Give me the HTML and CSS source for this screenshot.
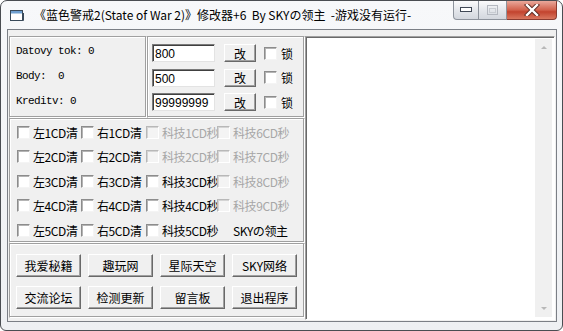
FILE: index.html
```html
<!DOCTYPE html>
<html>
<head>
  <meta charset="UTF-8">
  <title>蓝色警戒2 修改器</title>
  <link rel="stylesheet" href="styles.css">
</head>
<body>

  <div class="janela">
    <div class="titulo">
      <svg class="icone" width="14" height="12" viewBox="0 0 14 12">
        <rect x="0.5" y="0.5" width="12" height="10" fill="#fff" stroke="#3a4a5a"/>
        <rect x="1" y="1" width="11" height="2.5" fill="#6f9fd0"/>
        <path d="M3 10.5 L13.5 10.5 L13.5 3" fill="none" stroke="#3a4a5a"/>
      </svg>
      <span class="texto-titulo">《蓝色警戒2(State of War 2)》修改器+6&nbsp; By SKYの领主&nbsp; -游戏没有运行-</span>
      <div class="controles">
        <div class="ctl ctl-min">
          <svg width="12" height="6" viewBox="0 0 12 6"><rect x="0.5" y="0.5" width="11" height="4" fill="#fff" stroke="#404855"/></svg>
        </div>
        <div class="ctl ctl-max">
          <svg width="11" height="10" viewBox="0 0 11 10"><rect x="0.5" y="0.5" width="10" height="9" fill="none" stroke="#b4b8c0"/><rect x="2.5" y="3.5" width="6" height="4" fill="none" stroke="#c8ccd2"/></svg>
        </div>
        <div class="ctl ctl-fechar">
          <svg width="16" height="12" viewBox="0 0 16 12">
            <path d="M3 1 L13 11 M13 1 L3 11" stroke="#5a2a22" stroke-width="4.2" stroke-linecap="square"/>
            <path d="M3 1 L13 11 M13 1 L3 11" stroke="#fff" stroke-width="2.4" stroke-linecap="square"/>
          </svg>
        </div>
      </div>
    </div>

    <div class="cliente">
      <div class="coluna">
        <div class="linha-topo">
          <div class="painel info">
            <div class="rotulo">Datovy tok: 0</div>
            <div class="rotulo">Body:&nbsp; 0</div>
            <div class="rotulo">Kreditv: 0</div>
          </div>
          <div class="painel edicao">
            <div class="campo">
              <div class="entrada">800</div>
              <div class="botao mini">改</div>
              <div class="caixa"></div>
              <span class="trava">锁</span>
            </div>
            <div class="campo">
              <div class="entrada">500</div>
              <div class="botao mini">改</div>
              <div class="caixa"></div>
              <span class="trava">锁</span>
            </div>
            <div class="campo">
              <div class="entrada">99999999</div>
              <div class="botao mini">改</div>
              <div class="caixa"></div>
              <span class="trava">锁</span>
            </div>
          </div>
        </div>

        <div class="painel opcoes">
          <div class="opcao"><div class="caixa"></div><span>左1CD清</span></div>
          <div class="opcao"><div class="caixa"></div><span>右1CD清</span></div>
          <div class="opcao off"><div class="caixa"></div><span>科技1CD秒</span></div>
          <div class="opcao off"><div class="caixa"></div><span>科技6CD秒</span></div>

          <div class="opcao"><div class="caixa"></div><span>左2CD清</span></div>
          <div class="opcao"><div class="caixa"></div><span>右2CD清</span></div>
          <div class="opcao off"><div class="caixa"></div><span>科技2CD秒</span></div>
          <div class="opcao off"><div class="caixa"></div><span>科技7CD秒</span></div>

          <div class="opcao"><div class="caixa"></div><span>左3CD清</span></div>
          <div class="opcao"><div class="caixa"></div><span>右3CD清</span></div>
          <div class="opcao"><div class="caixa"></div><span>科技3CD秒</span></div>
          <div class="opcao off"><div class="caixa"></div><span>科技8CD秒</span></div>

          <div class="opcao"><div class="caixa"></div><span>左4CD清</span></div>
          <div class="opcao"><div class="caixa"></div><span>右4CD清</span></div>
          <div class="opcao"><div class="caixa"></div><span>科技4CD秒</span></div>
          <div class="opcao off"><div class="caixa"></div><span>科技9CD秒</span></div>

          <div class="opcao"><div class="caixa"></div><span>左5CD清</span></div>
          <div class="opcao"><div class="caixa"></div><span>右5CD清</span></div>
          <div class="opcao"><div class="caixa"></div><span>科技5CD秒</span></div>
          <div class="opcao assinatura"><span>SKYの领主</span></div>
        </div>

        <div class="painel atalhos">
          <div class="botao">我爱秘籍</div>
          <div class="botao">趣玩网</div>
          <div class="botao">星际天空</div>
          <div class="botao">SKY网络</div>
          <div class="botao">交流论坛</div>
          <div class="botao">检测更新</div>
          <div class="botao">留言板</div>
          <div class="botao">退出程序</div>
        </div>
      </div>

      <div class="registro">
        <div class="area"></div>
        <div class="rolagem">
          <span class="seta cima"></span>
          <span class="seta baixo"></span>
        </div>
      </div>
    </div>
  </div>

</body>
</html>
```

FILE: styles.css
```css
body {
  margin: 0;
  background-color: #ffffff;
  font-family: "Noto Sans CJK SC", sans-serif;
}

.janela {
  width: 563px;
  height: 331px;
  box-sizing: border-box;
  border: 1px solid #4a4d52;
  border-radius: 7px 7px 6px 6px;
  background: linear-gradient(#f7f8fa, #eef0f3);
  overflow: hidden;
}

/* barra de titulo */
.titulo {
  height: 28px;
  display: flex;
  align-items: flex-start;
}

.icone {
  margin: 9px 0 0 9px;
}

.texto-titulo {
  margin: 6px 0 0 10px;
  font-size: 12px;
  line-height: 16px;
  color: #000;
  white-space: nowrap;
}

.controles {
  display: flex;
  margin-left: auto;
  margin-right: 5px;
  height: 19px;
}

.ctl {
  display: flex;
  align-items: center;
  justify-content: center;
  box-sizing: border-box;
  height: 19px;
  border: 1px solid #8d939c;
  border-top: none;
  background: linear-gradient(#fbfbfc, #e2e5ea 55%, #d3d7de);
}

.ctl-min {
  width: 26px;
  border-radius: 0 0 0 4px;
}

.ctl-max {
  width: 28px;
  border-left: none;
}

.ctl-fechar {
  width: 50px;
  border-color: #8a3b30;
  border-left: none;
  border-radius: 0 0 4px 0;
  background: linear-gradient(#e9a89b, #d2614c 50%, #c2432e 60%, #d9775f);
}

/* area cliente */
.cliente {
  width: 550px;
  height: 293px;
  margin-left: 6px;
  box-sizing: border-box;
  border: 1px solid #7b7f86;
  background-color: #f0f0f0;
  padding: 6px 0 1px 1px;
  display: flex;
}

.coluna {
  width: 296px;
  display: flex;
  flex-direction: column;
}

.linha-topo {
  display: flex;
  height: 82px;
}

.painel {
  box-sizing: border-box;
  border: 1px solid;
  border-color: #a0a0a0 #ffffff #ffffff #a0a0a0;
  box-shadow: inset -1px -1px 0 #a0a0a0, inset 1px 1px 0 #ffffff;
}

.info {
  width: 138px;
  padding: 7px 0 0 6px;
  display: flex;
  flex-direction: column;
  gap: 11px;
}

.rotulo {
  font-family: "Liberation Mono", monospace;
  font-size: 11px;
  line-height: 14px;
  letter-spacing: -0.6px;
  color: #000;
}

.edicao {
  width: 158px;
  padding: 7px 0 0 4px;
  display: flex;
  flex-direction: column;
  gap: 6.5px;
}

.campo {
  display: flex;
  align-items: center;
  height: 18px;
}

.entrada {
  width: 63px;
  height: 18px;
  box-sizing: border-box;
  border: 1px solid;
  border-color: #7a7a7a #e3e3e3 #e3e3e3 #7a7a7a;
  box-shadow: inset 1px 1px 0 #404040;
  background-color: #fff;
  padding: 2px 0 0 2px;
  font-family: "Liberation Sans", sans-serif;
  font-size: 12px;
  line-height: 14px;
  color: #000;
}

.botao {
  box-sizing: border-box;
  display: flex;
  align-items: center;
  justify-content: center;
  background-color: #f0f0f0;
  border: 1px solid;
  border-color: #ffffff #696969 #696969 #ffffff;
  box-shadow: inset -1px -1px 0 #a0a0a0;
  font-size: 12px;
  color: #000;
}

.mini {
  width: 32px;
  height: 18px;
  margin-left: 9px;
}

.caixa {
  width: 13px;
  height: 13px;
  flex: none;
  box-sizing: border-box;
  border: 1px solid;
  border-color: #8c8c8c #f4f4f4 #f4f4f4 #8c8c8c;
  box-shadow: inset 1px 1px 0 #b4b4b4;
  background-color: #fff;
}

.campo .caixa {
  margin-left: 8px;
}

.trava {
  margin-left: 4px;
  font-size: 12px;
  color: #000;
}

/* grade de opcoes */
.opcoes {
  height: 125px;
  padding: 1px 0 0 7px;
  display: grid;
  grid-template-columns: 64px 65px 71px 1fr;
  grid-auto-rows: 24.5px;
}

.opcao {
  display: flex;
  align-items: center;
  font-size: 12px;
  color: #000;
  white-space: nowrap;
}

.opcao span {
  margin-left: 3px;
  letter-spacing: -0.4px;
}

.opcao.off {
  color: #a7a7a7;
}

.opcao.off .caixa {
  border-color: #b8b8b8 #ffffff #ffffff #b8b8b8;
  box-shadow: inset 1px 1px 0 #d4d4d4;
  background-color: #f4f4f4;
}

.assinatura span {
  margin-left: 16px;
}

/* botoes de atalho */
.atalhos {
  height: 75px;
  padding: 10px 0 0 6px;
  display: grid;
  grid-template-columns: repeat(4, 65px);
  grid-auto-rows: 23px;
  column-gap: 7px;
  row-gap: 9px;
}

/* caixa de registro */
.registro {
  width: 250px;
  height: 284px;
  box-sizing: border-box;
  border: 1px solid;
  border-color: #a0a0a0 #ffffff #ffffff #a0a0a0;
  box-shadow: inset 1px 1px 0 #696969;
  display: flex;
  padding: 2px 2px 2px 2px;
  background-color: #fff;
}

.area {
  flex: 1;
  background-color: #fff;
}

.rolagem {
  width: 17px;
  background-color: #f0f0f0;
  display: flex;
  flex-direction: column;
  justify-content: space-between;
  align-items: center;
  padding: 7px 0 7px;
}

.seta {
  width: 0;
  height: 0;
  border-left: 3px solid transparent;
  border-right: 3px solid transparent;
}

.cima {
  border-bottom: 3px solid #b8b8b8;
}

.baixo {
  border-top: 3px solid #b8b8b8;
}
```
